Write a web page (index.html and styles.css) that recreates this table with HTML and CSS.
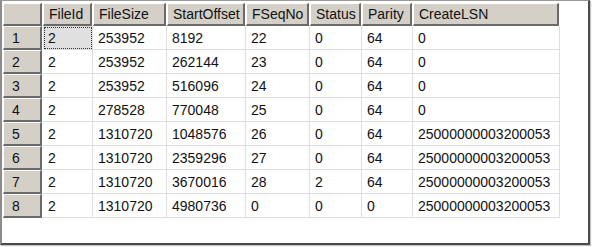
FILE: index.html
```
<!DOCTYPE html>
<html>
<head>
<meta charset="utf-8">
<link rel="stylesheet" href="styles.css">
</head>
<body>
<div class="frame">
  <div class="grid">
    <div class="hd corner"></div>
    <div class="hd">FileId</div>
    <div class="hd">FileSize</div>
    <div class="hd">StartOffset</div>
    <div class="hd">FSeqNo</div>
    <div class="hd">Status</div>
    <div class="hd">Parity</div>
    <div class="hd">CreateLSN</div>

    <div class="rh">1</div><div class="c sel">2</div><div class="c">253952</div><div class="c">8192</div><div class="c">22</div><div class="c">0</div><div class="c">64</div><div class="c">0</div>
    <div class="rh">2</div><div class="c">2</div><div class="c">253952</div><div class="c">262144</div><div class="c">23</div><div class="c">0</div><div class="c">64</div><div class="c">0</div>
    <div class="rh">3</div><div class="c">2</div><div class="c">253952</div><div class="c">516096</div><div class="c">24</div><div class="c">0</div><div class="c">64</div><div class="c">0</div>
    <div class="rh">4</div><div class="c">2</div><div class="c">278528</div><div class="c">770048</div><div class="c">25</div><div class="c">0</div><div class="c">64</div><div class="c">0</div>
    <div class="rh">5</div><div class="c">2</div><div class="c">1310720</div><div class="c">1048576</div><div class="c">26</div><div class="c">0</div><div class="c">64</div><div class="c">25000000003200053</div>
    <div class="rh">6</div><div class="c">2</div><div class="c">1310720</div><div class="c">2359296</div><div class="c">27</div><div class="c">0</div><div class="c">64</div><div class="c">25000000003200053</div>
    <div class="rh">7</div><div class="c">2</div><div class="c">1310720</div><div class="c">3670016</div><div class="c">28</div><div class="c">2</div><div class="c">64</div><div class="c">25000000003200053</div>
    <div class="rh">8</div><div class="c">2</div><div class="c">1310720</div><div class="c">4980736</div><div class="c">0</div><div class="c">0</div><div class="c">0</div><div class="c">25000000003200053</div>
  </div>
</div>
</body>
</html>
```
FILE: styles.css
```
html, body {
  margin: 0;
  padding: 0;
  background: #fff;
}
body {
  width: 592px;
  height: 247px;
  font-family: "Liberation Sans", Arial, sans-serif;
  font-size: 14px;
  color: #111;
}
.frame {
  box-sizing: border-box;
  width: 590px;
  height: 245px;
  border-left: 2px solid #8c8c8c;
  border-top: 1px solid #9a9a9a;
  border-right: 2px solid #4a4a4a;
  border-bottom: 2px solid #4a4a4a;
  box-shadow: 1px 1px 1px #c4c4c4;
  padding: 2px 0 0 1px;
  background: #fff;
}
.grid {
  display: grid;
  grid-template-columns: 40px 50px 74px 79px 64px 52px 51px 147px;
  grid-template-rows: 23px repeat(8, 24px);
  width: max-content;
}
.hd, .rh {
  box-sizing: border-box;
  background: #d4d0c8;
  border-style: solid;
  border-width: 1px 2px 2px 1px;
  border-color: #fff #6a6a6a #6a6a6a #fff;
  display: flex;
  align-items: center;
  white-space: nowrap;
  overflow: hidden;
}
.hd {
  margin-right: 1px;
  padding-left: 5px;
}
.rh {
  padding-left: 8px;
  margin-right: 1px;
}
.c {
  box-sizing: border-box;
  border-right: 1px solid #dedede;
  border-bottom: 1px solid #dedede;
  display: flex;
  align-items: center;
  padding-left: 5px;
  white-space: nowrap;
}
.sel {
  background: #e0e0e0;
  outline: 1px dotted #333;
  outline-offset: -2px;
}
```
